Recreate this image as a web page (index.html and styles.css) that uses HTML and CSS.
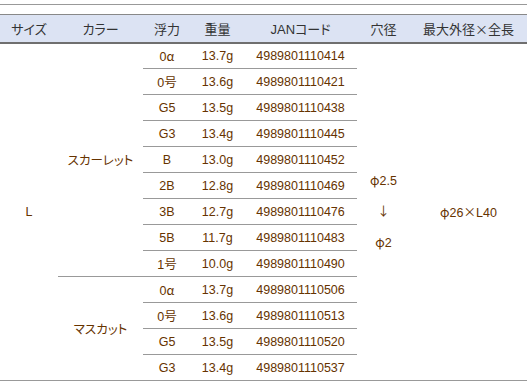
FILE: index.html
```html
<!DOCTYPE html>
<html lang="ja">
<head>
  <meta charset="UTF-8">
  <title>スペック表</title>
  <link rel="stylesheet" href="styles.css">
</head>
<body>
  <div class="rule"></div>

  <table class="spec">
    <colgroup>
      <col class="c-size">
      <col class="c-color">
      <col class="c-float">
      <col class="c-weight">
      <col class="c-jan">
      <col class="c-hole">
      <col class="c-max">
    </colgroup>
    <thead>
      <tr>
        <th>サイズ</th>
        <th>カラー</th>
        <th>浮力</th>
        <th>重量</th>
        <th>JANコード</th>
        <th>穴径</th>
        <th>最大外径<span class="jp">×</span>全長</th>
      </tr>
    </thead>
    <tbody>
      <tr>
        <td rowspan="13">L</td>
        <td rowspan="9">スカーレット</td>
        <td>0<span class="jp">α</span></td><td>13.7g</td><td>4989801110414</td>
        <td rowspan="13" class="hole"><span class="jp">φ</span>2.5<br><span class="jp">↓</span><br><span class="jp">φ</span>2</td>
        <td rowspan="13"><span class="jp">φ</span>26<span class="jp">×</span>L40</td>
      </tr>
      <tr><td>0号</td><td>13.6g</td><td>4989801110421</td></tr>
      <tr><td>G5</td><td>13.5g</td><td>4989801110438</td></tr>
      <tr><td>G3</td><td>13.4g</td><td>4989801110445</td></tr>
      <tr><td>B</td><td>13.0g</td><td>4989801110452</td></tr>
      <tr><td>2B</td><td>12.8g</td><td>4989801110469</td></tr>
      <tr><td>3B</td><td>12.7g</td><td>4989801110476</td></tr>
      <tr><td>5B</td><td>11.7g</td><td>4989801110483</td></tr>
      <tr><td>1号</td><td>10.0g</td><td>4989801110490</td></tr>
      <tr>
        <td rowspan="4">マスカット</td>
        <td>0<span class="jp">α</span></td><td>13.7g</td><td>4989801110506</td>
      </tr>
      <tr><td>0号</td><td>13.6g</td><td>4989801110513</td></tr>
      <tr><td>G5</td><td>13.5g</td><td>4989801110520</td></tr>
      <tr><td>G3</td><td>13.4g</td><td>4989801110537</td></tr>
    </tbody>
  </table>
</body>
</html>
```

FILE: styles.css
```css
* {
  box-sizing: border-box;
}

body {
  margin: 0;
  padding-top: 4px;
  background: #fff;
  font-family: "Liberation Sans", "Noto Sans CJK JP", sans-serif;
}

.rule {
  border-top: 1px solid #999;
  margin-bottom: 9px;
}

.spec {
  width: 527px;
  border-collapse: collapse;
  table-layout: fixed;
  text-align: center;
}

.c-size { width: 58px; }
.c-color { width: 85px; }
.c-float { width: 48px; }
.c-weight { width: 53px; }
.c-jan { width: 113px; }
.c-hole { width: 53px; }
.c-max { width: 117px; }

.spec th {
  height: 28px;
  padding: 0;
  font-size: 13px;
  font-weight: normal;
  color: #333;
  background-color: #dce3f3;
  border-top: 1px solid #888;
  border-bottom: 2px solid #6f6f6f;
  font-feature-settings: "palt";
}

.spec td {
  height: 26px;
  padding: 0;
  font-size: 12.5px;
  color: #663300;
  border-bottom: 1px solid #999;
  font-feature-settings: "palt";
}

.spec td.hole {
  line-height: 29px;
}

/* full-width symbols: phi, arrow, times, alpha */
.jp {
  font-family: "Noto Sans CJK JP", sans-serif;
  font-feature-settings: normal;
}
```
